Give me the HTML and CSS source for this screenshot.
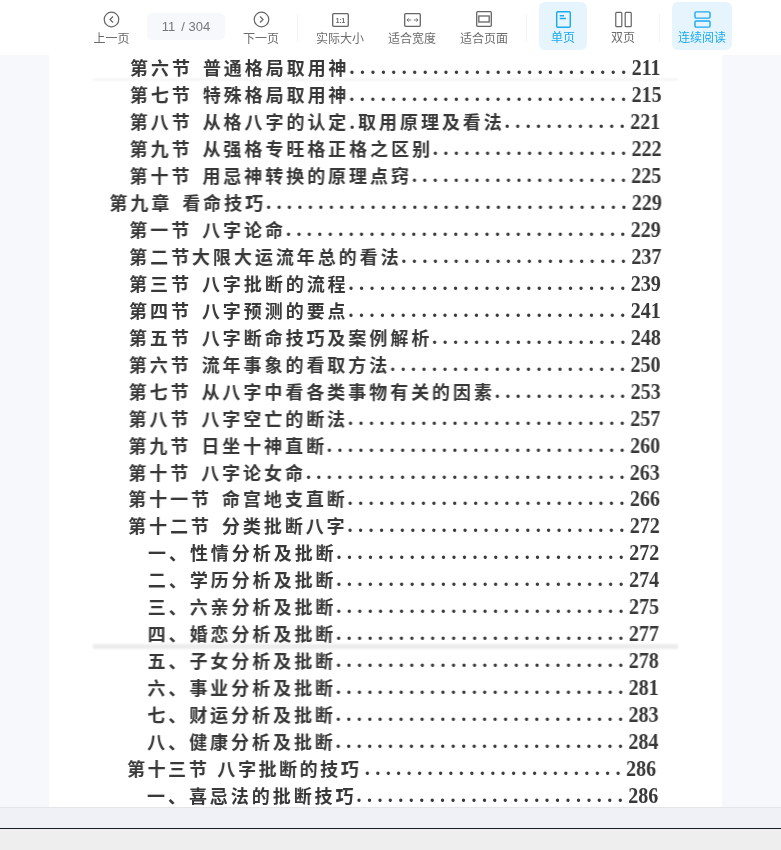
FILE: index.html
```html
<!DOCTYPE html>
<html lang="zh">
<head>
<meta charset="utf-8">
<title>目录</title>
<link rel="stylesheet" href="styles.css">
</head>
<body>
<header class="toolbar">
  <div class="tool tool-prev">
    <svg class="ico" viewBox="0 0 18 18"><circle cx="9" cy="9" r="7.7"/><path d="M10.6 5.8 7.4 9l3.2 3.2"/></svg>
    <span>上一页</span>
  </div>
  <div class="pager"><span>11</span><span class="pager-total">/ 304</span></div>
  <div class="tool tool-next">
    <svg class="ico" viewBox="0 0 18 18"><circle cx="9" cy="9" r="7.7"/><path d="M7.4 5.8 10.6 9l-3.2 3.2"/></svg>
    <span>下一页</span>
  </div>
  <i class="sep"></i>
  <div class="tool tool-wide">
    <svg class="ico ico-wide" viewBox="0 0 17 14"><rect x=".7" y=".7" width="15.6" height="12.6" rx="1"/><text x="8.5" y="9.6" class="ratio">1:1</text></svg>
    <span>实际大小</span>
  </div>
  <div class="tool tool-wide">
    <svg class="ico ico-wide" viewBox="0 0 17 14"><rect x=".7" y=".7" width="15.6" height="12.6" rx="1"/><path class="thin" d="M3 7h4.2M4.6 5.3 3 7l1.6 1.7M9.8 7H14M12.4 5.3 14 7l-1.6 1.7"/></svg>
    <span>适合宽度</span>
  </div>
  <div class="tool tool-wide">
    <svg class="ico ico-fit" viewBox="0 0 16 16"><rect x=".7" y=".7" width="14.6" height="14.6" rx="1"/><rect x="2.8" y="5" width="10.4" height="6"/></svg>
    <span>适合页面</span>
  </div>
  <i class="sep"></i>
  <div class="tool tool-mode active">
    <svg class="ico ico-mode" viewBox="0 0 16 18"><rect x=".8" y=".8" width="14.4" height="16.4" rx="1.2"/><path d="M4 5h4.5M4 8h6.5"/></svg>
    <span>单页</span>
  </div>
  <div class="tool tool-mode">
    <svg class="ico ico-mode" viewBox="0 0 18 18"><rect x=".8" y="1.5" width="6.4" height="15" rx="1"/><rect x="10.8" y="1.5" width="6.4" height="15" rx="1"/></svg>
    <span>双页</span>
  </div>
  <i class="sep"></i>
  <div class="tool tool-wide active">
    <svg class="ico ico-mode" viewBox="0 0 18 18"><rect x="1" y=".9" width="16" height="6.6" rx="1.4"/><rect x="1" y="10.5" width="16" height="6.6" rx="1.4"/></svg>
    <span>连续阅读</span>
  </div>
</header>

<main class="viewer">
  <article class="page">
    <div class="toc">
      <div class="row sec"><span class="t">第六节 普通格局取用神</span><span class="d">...........................</span><b>211</b></div>
      <div class="row sec"><span class="t">第七节 特殊格局取用神</span><span class="d">...........................</span><b>215</b></div>
      <div class="row sec"><span class="t">第八节 从格八字的认定.取用原理及看法</span><span class="d">............</span><b>221</b></div>
      <div class="row sec"><span class="t">第九节 从强格专旺格正格之区别</span><span class="d">...................</span><b>222</b></div>
      <div class="row sec"><span class="t">第十节 用忌神转换的原理点窍</span><span class="d">.....................</span><b>225</b></div>
      <div class="row ch"><span class="t">第九章 看命技巧</span><span class="d">...................................</span><b>229</b></div>
      <div class="row sec"><span class="t">第一节 八字论命</span><span class="d">.................................</span><b>229</b></div>
      <div class="row sec"><span class="t">第二节大限大运流年总的看法</span><span class="d">......................</span><b>237</b></div>
      <div class="row sec"><span class="t">第三节 八字批断的流程</span><span class="d">...........................</span><b>239</b></div>
      <div class="row sec"><span class="t">第四节 八字预测的要点</span><span class="d">...........................</span><b>241</b></div>
      <div class="row sec"><span class="t">第五节 八字断命技巧及案例解析</span><span class="d">...................</span><b>248</b></div>
      <div class="row sec"><span class="t">第六节 流年事象的看取方法</span><span class="d">.......................</span><b>250</b></div>
      <div class="row sec"><span class="t">第七节 从八字中看各类事物有关的因素</span><span class="d">.............</span><b>253</b></div>
      <div class="row sec"><span class="t">第八节 八字空亡的断法</span><span class="d">...........................</span><b>257</b></div>
      <div class="row sec"><span class="t">第九节 日坐十神直断</span><span class="d">.............................</span><b>260</b></div>
      <div class="row sec"><span class="t">第十节 八字论女命</span><span class="d">...............................</span><b>263</b></div>
      <div class="row sec"><span class="t">第十一节 命宫地支直断</span><span class="d">...........................</span><b>266</b></div>
      <div class="row sec"><span class="t">第十二节 分类批断八字</span><span class="d">...........................</span><b>272</b></div>
      <div class="row sub"><span class="t">一、性情分析及批断</span><span class="d">............................</span><b>272</b></div>
      <div class="row sub"><span class="t">二、学历分析及批断</span><span class="d">............................</span><b>274</b></div>
      <div class="row sub"><span class="t">三、六亲分析及批断</span><span class="d">............................</span><b>275</b></div>
      <div class="row sub"><span class="t">四、婚恋分析及批断</span><span class="d">............................</span><b>277</b></div>
      <div class="row sub"><span class="t">五、子女分析及批断</span><span class="d">............................</span><b>278</b></div>
      <div class="row sub"><span class="t">六、事业分析及批断</span><span class="d">............................</span><b>281</b></div>
      <div class="row sub"><span class="t">七、财运分析及批断</span><span class="d">............................</span><b>283</b></div>
      <div class="row sub"><span class="t">八、健康分析及批断</span><span class="d">............................</span><b>284</b></div>
      <div class="row sec"><span class="t t-tight">第十三节 八字批断的技巧</span><span class="d">.........................</span><b>286</b></div>
      <div class="row sub"><span class="t">一、喜忌法的批断技巧</span><span class="d">..........................</span><b>286</b></div>
    </div>
    <i class="crease crease-top"></i>
    <i class="crease crease-mid"></i>
  </article>
</main>
<div class="statusbar"></div>
<div class="taskbar"></div>
</body>
</html>
```
FILE: styles.css
```css
* { box-sizing: border-box; }
html, body { margin: 0; height: 100%; }
body {
  width: 781px;
  height: 850px;
  overflow: hidden;
  display: flex;
  flex-direction: column;
  background: #eeeeee;
  font-family: "Noto Sans CJK SC", "Liberation Sans", sans-serif;
}

/* toolbar */
.toolbar {
  flex: 0 0 55px;
  display: flex;
  align-items: flex-start;
  gap: 12px;
  padding: 2px 0 0 88px;
  background: #fff;
}
.tool {
  height: 48px;
  display: flex;
  flex-direction: column;
  align-items: center;
  justify-content: flex-start;
  padding-top: 9px;
  border-radius: 6px;
  color: #6b6b6b;
  font-size: 12px;
  line-height: 16px;
  white-space: nowrap;
}
.tool span { margin-top: 2px; }
.tool-prev { width: 47px; }
.tool-next { width: 48px; }
.tool-wide { width: 60px; }
.tool-mode { width: 48px; }
.tool.active { background: #e6f5fd; color: #1ba9ee; }
.ico {
  width: 17px;
  height: 17px;
  flex: none;
  fill: none;
  stroke: #666;
  stroke-width: 1.3;
}
.ico-wide { width: 17px; height: 14px; margin-top: 2px; margin-bottom: 1px; }
.ico-fit { width: 16px; height: 16px; margin-top: 0; margin-bottom: 1px; }
.ico-mode { width: 17px; height: 17px; }
.tool-mode, .active { padding-top: 9px; }
.tool-mode span, .active span { margin-top: 1px; }
.active .ico { stroke: #1ba9ee; stroke-width: 1.5; }
.thin { stroke-width: .9; }
.ratio {
  font-family: "Liberation Sans", sans-serif;
  font-size: 6.5px;
  font-weight: 700;
  text-anchor: middle;
  fill: #666;
  stroke: none;
}
.pager {
  width: 78px;
  height: 27px;
  margin-top: 11px;
  display: flex;
  justify-content: center;
  align-items: center;
  gap: 6px;
  background: #f6f8fc;
  border-radius: 5px;
  color: #777;
  font-size: 13px;
  font-family: "Liberation Sans", sans-serif;
}
.sep {
  width: 1px;
  height: 28px;
  margin-top: 12px;
  background: #f4f4f4;
  flex: none;
}

/* document area */
.viewer {
  flex: 0 0 752px;
  padding-left: 49px;
  overflow: hidden;
  background: #f6f8fc;
}
.page {
  position: relative;
  width: 673px;
  height: 752px;
  background: #fff;
  overflow: hidden;
}
.toc {
  margin-top: -1.5px;
  transform: skewX(-.23deg);
  transform-origin: 0 0;
  filter: blur(.35px);
  color: #383838;
}
.row {
  display: flex;
  align-items: center;
  height: 26.95px;
  padding-right: 63px;
  font-size: 18px;
  font-weight: 700;
  line-height: 20px;
  white-space: nowrap;
}
.row.ch { padding-left: 61px; }
.row.sec { padding-left: 81px; }
.row.sub { padding-left: 101px; }
.t { letter-spacing: 2.95px; word-spacing: 3px; flex: none; }
.t-tight { letter-spacing: 2.55px; word-spacing: 1.5px; }
.d {
  flex: none;
  margin-left: auto;
  font-family: "Liberation Serif", serif;
  font-size: 20px;
  letter-spacing: 5.45px;
}
.row b {
  flex: none;
  width: 30px;
  font-family: "Liberation Serif", serif;
  font-size: 20px;
  letter-spacing: 0;
  transform: scaleY(1.18);
}

/* scan shadows lying over the page */
.crease {
  position: absolute;
  left: 44px;
  width: 585px;
  background: #ececec;
  filter: blur(.8px);
  mix-blend-mode: multiply;
}
.crease-top { top: 24px; height: 1px; background: #e8e8e8; }
.crease-mid { top: 589px; height: 5px; }

/* bottom bars */
.statusbar {
  flex: 0 0 21px;
  background: #f0f1f7;
  border-top: 1px solid #e4e5ea;
}
.taskbar {
  flex: 0 0 22px;
  background: #eeeeee;
  border-top: 1px solid #1b1b2e;
}
```
